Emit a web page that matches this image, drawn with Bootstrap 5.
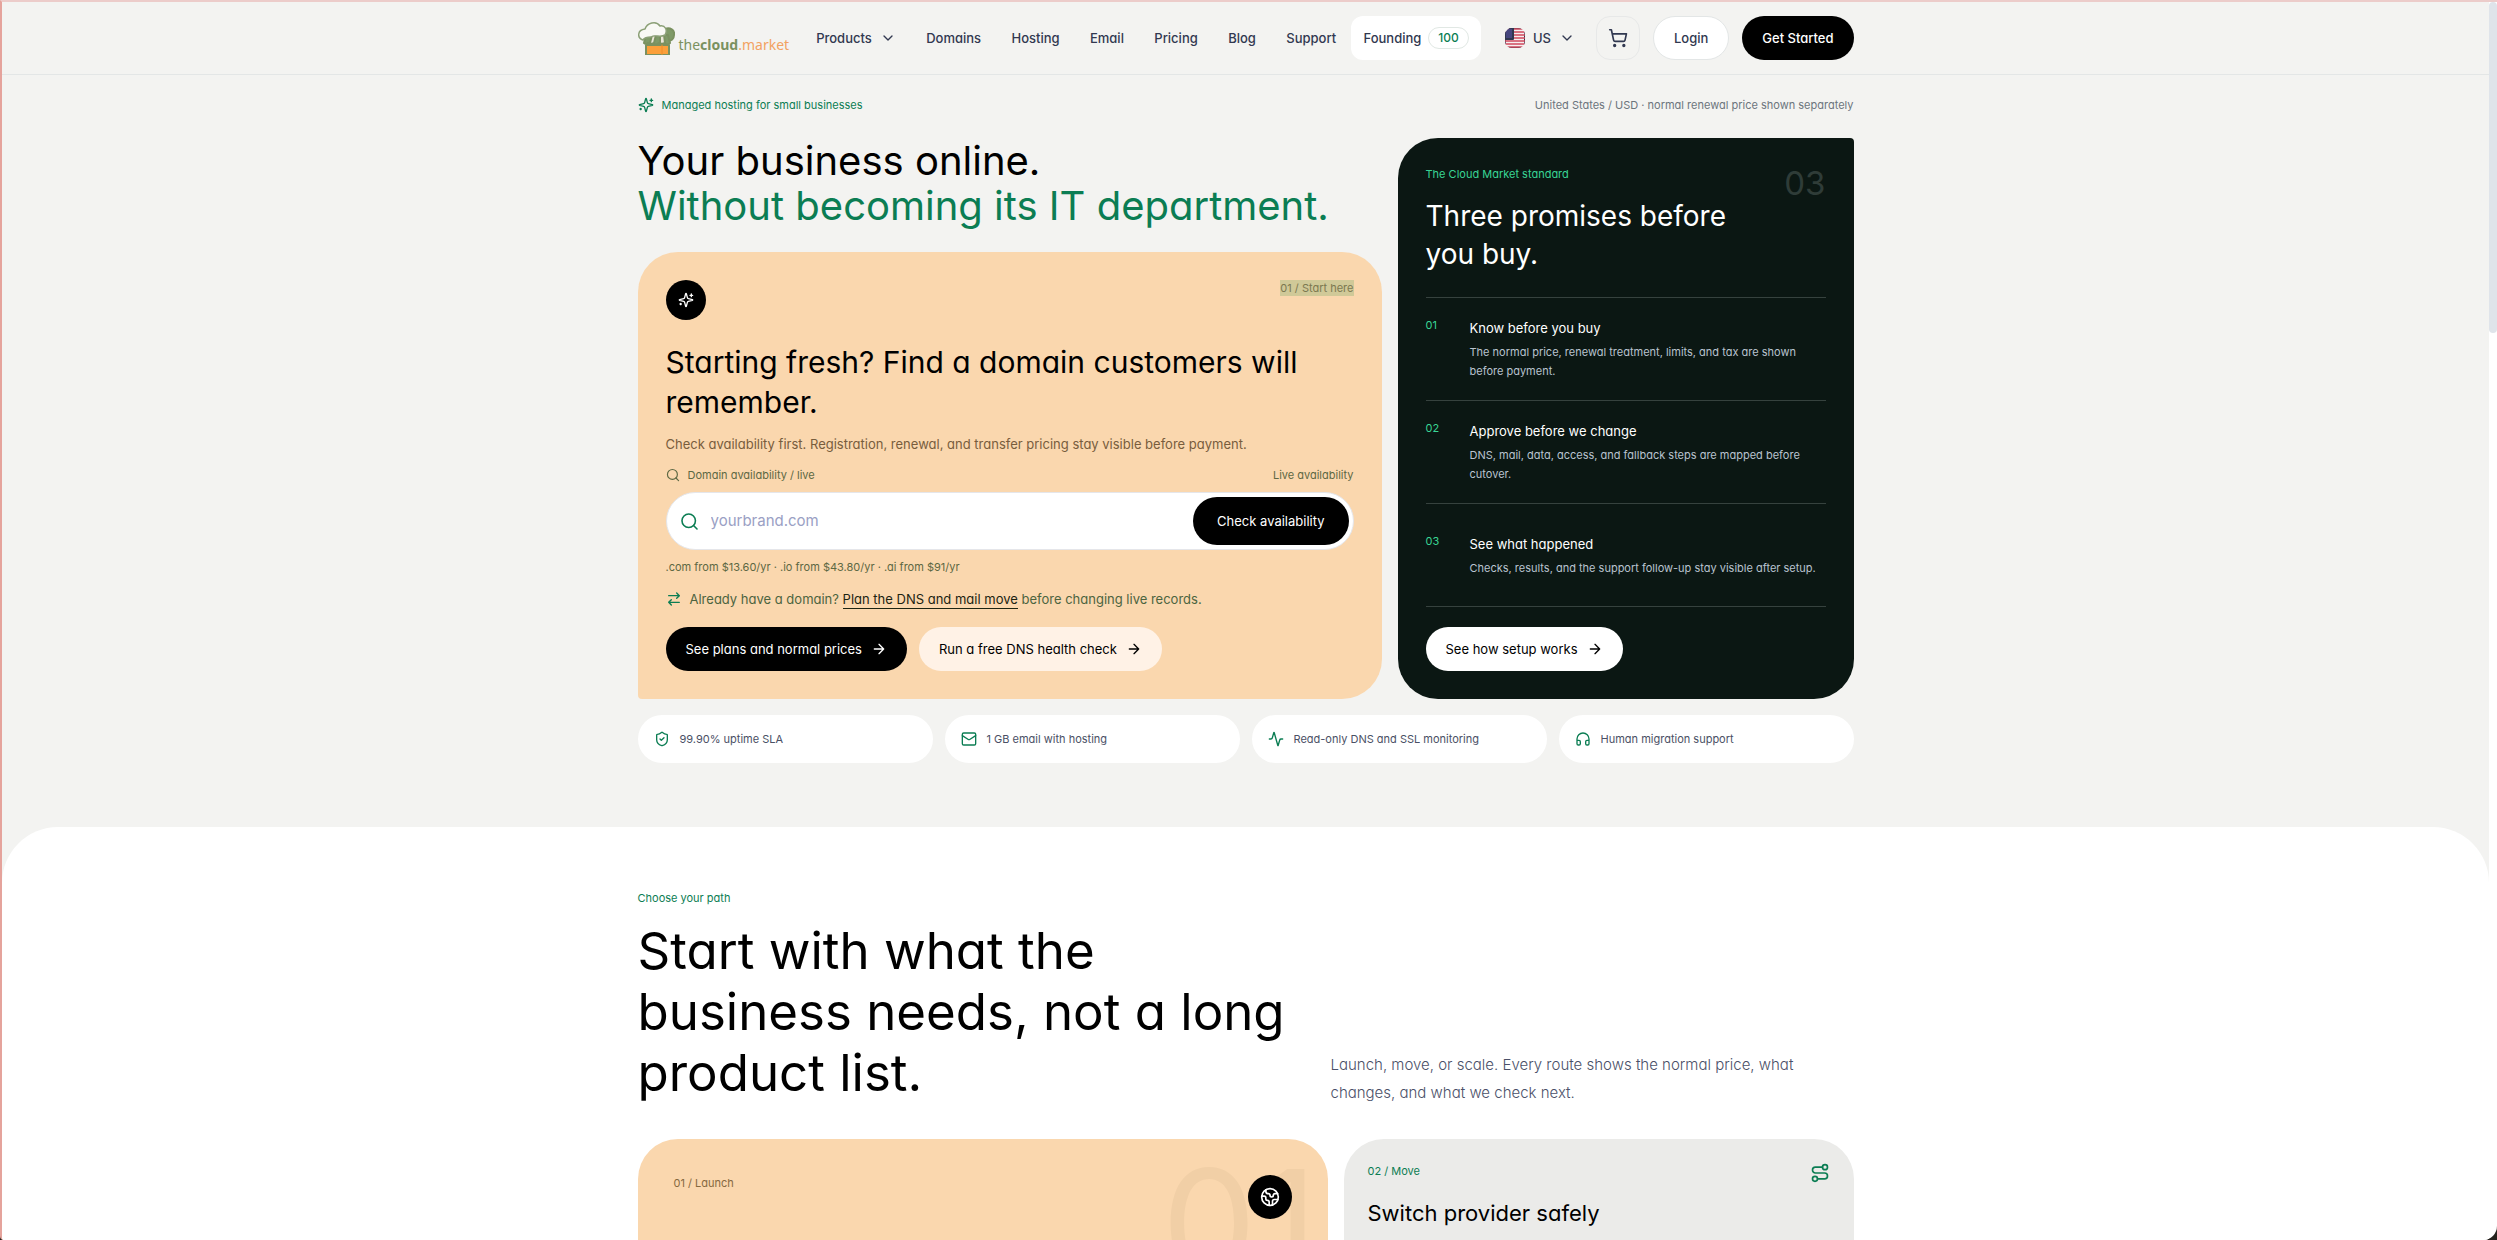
<!DOCTYPE html>
<html lang="en">
<head>
<meta charset="utf-8">
<meta name="viewport" content="width=device-width, initial-scale=1">
<title>thecloud.market</title>
<link href="https://cdn.jsdelivr.net/npm/bootstrap@5.3.0/dist/css/bootstrap.min.css" rel="stylesheet">
<style>
:root { --ink:#000; --green:#0b7d53; --peach:#fad7ae; --night:#0b1713; --stone:#f3f3f1; --slate:#4a5068; }
html { background:#24221d; }
body { font-family:Inter,"Liberation Sans",sans-serif; font-feature-settings:"cv11"; font-size:13px; line-height:20px; color:var(--ink); background:transparent; }
.frame { height:100vh; overflow:hidden; background:#fff; border-top:2px solid #ecccca; border-left:2px solid #e5a39c; border-radius:0 0 14px 4px; padding-right:8px; }
.scroll-thumb { position:fixed; top:2px; right:0; width:8px; height:331px; border-radius:4px; background:#dfe4ea; }
.wrap { width:100%; max-width:1216px; margin:0 auto; }
svg { display:block; flex:none; fill:none; stroke:currentColor; stroke-width:2; stroke-linecap:round; stroke-linejoin:round; }
.fs-tiny { font-size:11px; line-height:16px; }
.txt-green { color:var(--green); }

/* top bar */
.topbar { background:var(--stone); border-bottom:1px solid #e3e6e6; padding:14px 0; }
.topbar nav { padding-left:12px; }
.topbar .nav-item-link { display:flex; align-items:center; gap:8px; height:44px; padding:0 15px; font-size:13px; font-weight:500; color:#313850; text-decoration:none; border:0; background:none; white-space:nowrap; }
.topbar .founding { background:#fff; border-radius:12px; padding:0 12px; gap:7px; }
.count-pill { border:1px solid #e1e8e4; border-radius:11px; padding:0 9px; height:22px; line-height:20px; font-size:12px; color:var(--green); }
.brand { color:#7a9160; text-decoration:none; font-family:"Noto Sans",sans-serif; font-size:14px; line-height:20px; gap:4px; }
.brand .tail { color:#f2a262; }
.brand b { font-weight:700; }
.top-actions { gap:13px; }
.square-btn { width:44px; height:44px; border:1px solid #e7e8e8; border-radius:14px; background:transparent; color:#313850; }
.pill { display:inline-flex; align-items:center; justify-content:center; gap:9px; height:44px; padding:0 20px; border:0; border-radius:22px; font-size:13px; line-height:20px; white-space:nowrap; text-decoration:none; }
.pill-dark { background:#000; color:#fff; }
.pill-light { background:#fff; color:#000; }
.pill-cream { background:#fff2e6; color:#000; }
.pill-login { border:1px solid #e3e6e6; color:#313850; }

/* hero */
.hero { background:var(--stone); padding:22px 0 64px; }
.hero-top { height:16px; margin-bottom:25px; }
.hero-grid { display:grid; grid-template-columns:744fr 456fr; gap:16px; }
h1 { font-size:40px; line-height:45px; font-weight:400; margin:0 0 24px; }
.start-card { background:var(--peach); border-radius:40px 40px 40px 4px; padding:28px; }
.round-icon { width:40px; height:40px; border-radius:50%; background:#000; color:#fff; }
.picked { background:#d0c998; color:#7c7850; }
.start-card h2 { font-size:30px; line-height:40px; font-weight:400; margin:22px 0 12px; }
.start-card p { margin:0; color:#785d3d; }
.field-head { margin:13px 0 9px; }
.field { height:58px; border:1px solid #e5e6ea; border-radius:29px; background:#fff; padding:4px 4px 4px 13px; margin-bottom:9px; }
.field input { border:0; outline:0; background:none; font-size:15px; color:#000; min-width:0; padding:0 0 0 12px; }
.field input::placeholder { color:#9aa0c4; opacity:1; }
.olive { color:#5d6843; }
.brown { color:#86693f; }
.moving { color:#4c6440; gap:8px; margin:14px 0 18px; }
.moving a { color:#1c2412; text-decoration:none; border-bottom:1px solid #1c2412; padding-bottom:1px; }
.card-actions { display:flex; flex-wrap:wrap; gap:12px; }

.promise-card { background:var(--night); color:#fff; border-radius:40px 4px 40px 40px; padding:28px; }
.promise-card .kicker { margin-bottom:15px; }
.promise-card h2 { font-size:28px; line-height:38px; font-weight:400; margin:0; max-width:340px; }
.bright { color:#39d595; }
.big-three { font-size:33px; line-height:34px; color:#2f3c38; }
.promises { list-style:none; margin:0 0 20px; padding:0; border-top:1px solid #36423e; flex:1; display:grid; grid-auto-rows:1fr; }
.promises li { display:grid; grid-template-columns:44px 1fr; align-content:center; border-bottom:1px solid #36423e; }
.promises h3 { font-size:13px; line-height:22px; font-weight:400; margin:0 0 4px; }
.promises p { font-size:11px; line-height:19px; margin:0; color:#b9c3cf; }

.facts { display:grid; grid-template-columns:repeat(4,1fr); gap:12px; margin:16px 0 0; padding:0; list-style:none; }
.facts li { display:flex; align-items:center; gap:10px; height:48px; padding:0 16px; border-radius:24px; background:#fff; color:#4a5065; font-size:11px; }
.facts svg { color:var(--green); }

/* paths */
.paths { background:#fff; border-radius:56px 56px 0 0; padding-top:63px; }
.paths-wrap { background:var(--stone); }
.paths h2 { font-size:51px; line-height:61px; font-weight:400; margin:0; }
.paths-intro { display:grid; grid-template-columns:661fr 523fr; column-gap:32px; align-items:end; margin:14px 0 36px; }
.paths-intro p { font-size:15px; line-height:28px; font-weight:300; color:var(--slate); margin:0 0 -4px; max-width:480px; }
.path-grid { display:grid; grid-template-columns:690fr 510fr; gap:16px; }
.path-card { position:relative; overflow:hidden; min-height:400px; border-radius:40px; }
.launch { background:var(--peach); padding:36px; }
.launch .ghost { position:absolute; top:6px; right:10px; font-size:150px; line-height:158px; color:#f1cfa6; }
.launch .globe { position:relative; width:44px; height:44px; border-radius:50%; background:#000; color:#fff; }
.move { background:#ebebe9; padding:24px; }
.move h3 { font-size:22px; line-height:30px; font-weight:400; margin:15px 0 0; }
</style>
<script src="https://cdn.jsdelivr.net/npm/bootstrap@5.3.0/dist/js/bootstrap.bundle.min.js" defer></script>
</head>
<body>
<svg width="0" height="0" class="position-absolute" aria-hidden="true">
  <symbol id="i-sparkles" viewBox="0 0 24 24"><path d="M9.937 15.5A2 2 0 0 0 8.5 14.063l-6.135-1.582a.5.5 0 0 1 0-.962L8.5 9.936A2 2 0 0 0 9.937 8.5l1.582-6.135a.5.5 0 0 1 .963 0L14.063 8.5A2 2 0 0 0 15.5 9.937l6.135 1.581a.5.5 0 0 1 0 .964L15.5 14.063a2 2 0 0 0-1.437 1.437l-1.582 6.135a.5.5 0 0 1-.963 0z"/><path d="M20 3v4M22 5h-4M4 17v2M5 18H3"/></symbol>
  <symbol id="i-chevron" viewBox="0 0 24 24"><path d="m6 9 6 6 6-6"/></symbol>
  <symbol id="i-cart" viewBox="0 0 24 24"><circle cx="8" cy="21" r="1"/><circle cx="19" cy="21" r="1"/><path d="M2.05 2.05h2l2.66 12.42a2 2 0 0 0 2 1.58h9.78a2 2 0 0 0 1.95-1.57l1.65-7.43H5.12"/></symbol>
  <symbol id="i-search" viewBox="0 0 24 24"><circle cx="11" cy="11" r="8.500"/><path d="m21.500 21.500-4.400-4.400"/></symbol>
  <symbol id="i-swap" viewBox="0 0 24 24"><path d="m16 3 4 4-4 4M20 7H4M8 21l-4-4 4-4M4 17h16"/></symbol>
  <symbol id="i-arrow" viewBox="0 0 24 24"><path d="M5 12h14M12 5l7 7-7 7"/></symbol>
  <symbol id="i-shield" viewBox="0 0 24 24"><path d="M20 13c0 5-3.500 7.500-7.660 8.950a1 1 0 0 1-.670-.010C7.500 20.500 4 18 4 13V6a1 1 0 0 1 1-1c2 0 4.500-1.200 6.240-2.720a1.170 1.170 0 0 1 1.520 0C14.510 3.810 17 5 19 5a1 1 0 0 1 1 1z"/><path d="m9 12 2 2 4-4"/></symbol>
  <symbol id="i-mail" viewBox="0 0 24 24"><rect x="2" y="3" width="20" height="18" rx="2"/><path d="m22 7-8.970 5.700a1.940 1.940 0 0 1-2.060 0L2 7"/></symbol>
  <symbol id="i-activity" viewBox="0 0 24 24"><path d="M22 12h-2.480a2 2 0 0 0-1.930 1.460l-2.350 8.360a.25.25 0 0 1-.480 0L9.240 2.180a.25.25 0 0 0-.480 0l-2.350 8.360A2 2 0 0 1 4.490 12H2"/></symbol>
  <symbol id="i-headphones" viewBox="0 0 24 24"><path d="M3 14h3a2 2 0 0 1 2 2v3a2 2 0 0 1-2 2H5a2 2 0 0 1-2-2v-7a9 9 0 0 1 18 0v7a2 2 0 0 1-2 2h-1a2 2 0 0 1-2-2v-3a2 2 0 0 1 2-2h3"/></symbol>
  <symbol id="i-earth" viewBox="0 0 24 24"><path d="M21.540 15H17a2 2 0 0 0-2 2v4.540M7 3.340V5a3 3 0 0 0 3 3 2 2 0 0 1 2 2c0 1.100.9 2 2 2a2 2 0 0 0 2-2c0-1.100.9-2 2-2h3.170M11 21.950V18a2 2 0 0 0-2-2 2 2 0 0 1-2-2v-1a2 2 0 0 0-2-2H2.050"/><circle cx="12" cy="12" r="10"/></symbol>
  <symbol id="i-route" viewBox="0 0 24 24"><circle cx="6" cy="19" r="3"/><path d="M9 19h8.500a3.500 3.500 0 0 0 0-7h-11a3.500 3.500 0 0 1 0-7H15"/><circle cx="18" cy="5" r="3"/></symbol>
</svg>

<div class="frame">
  <header class="topbar">
    <div class="wrap d-flex align-items-center">
      <a class="brand d-flex align-items-end" href="#">
        <svg width="37" height="34" viewBox="0 0 37 34" stroke="none" aria-hidden="true">
          <path d="M27 8c5-2 10 1 9 6 0 4-3 6-6 6l-5-4z" fill="#7f9a68"/>
          <path d="M8 14h22l2 8c-2 2-4 2-5 0-2 2-4 2-6 0-2 2-4 2-6 0-2 2-4 2-5 0-1 1-3 1-4 0z" fill="#7f9a68"/>
          <path d="M14 14h4l-2 8c-2 1-3 1-4 0zM22 14h4l1 8c-2 1-4 1-5 0z" fill="#ebe6d8"/>
          <path d="M5 19c-6-2-6-10 2-11 2-6 11-9 15-3 5-1 8 4 5 9-5 3-10-1-14 2-3 0-6 0-8 3z" fill="#f9f9f5" stroke="#8ca077" stroke-width="1.500"/>
          <path d="M8 24h23v10H8z" fill="#fb9f3a"/><path d="M24 24v10" stroke="#f08c28" stroke-width="1"/>
        </svg>
        <span>the<b>cloud</b><span class="tail">.market</span></span>
      </a>
      <nav class="d-flex flex-grow-1 align-items-center justify-content-between">
        <button class="nav-item-link" type="button">Products <svg width="16" height="16"><use href="#i-chevron"/></svg></button>
        <a class="nav-item-link" href="#">Domains</a>
        <a class="nav-item-link" href="#">Hosting</a>
        <a class="nav-item-link" href="#">Email</a>
        <a class="nav-item-link" href="#">Pricing</a>
        <a class="nav-item-link" href="#">Blog</a>
        <a class="nav-item-link" href="#">Support</a>
        <a class="nav-item-link founding" href="#">Founding <span class="count-pill">100</span></a>
      </nav>
      <div class="top-actions d-flex align-items-center ps-2">
        <button class="nav-item-link ps-3 pe-2" type="button">
          <svg width="20" height="20" viewBox="0 0 20 20" stroke="none" aria-hidden="true">
            <clipPath id="flag-clip"><rect width="20" height="20" rx="7"/></clipPath>
            <g clip-path="url(#flag-clip)"><path fill="#f7eef0" d="M0 0h20v20H0z"/><path stroke="#cf4a5e" stroke-width="1.600" d="M0 1h20M0 4h20M0 7h20M0 10h20M0 13h20M0 16h20M0 19h20"/><path fill="#46467f" d="M0 0h8v11H0z"/></g>
          </svg>US <svg width="16" height="16"><use href="#i-chevron"/></svg>
        </button>
        <button class="square-btn d-flex align-items-center justify-content-center" type="button" aria-label="Cart"><svg width="20" height="20" stroke-width="1.500"><use href="#i-cart"/></svg></button>
        <a class="pill pill-light pill-login fw-medium" href="#">Login</a>
        <a class="pill pill-dark fw-medium" href="#">Get Started</a>
      </div>
    </div>
  </header>

  <section class="hero">
    <div class="wrap">
      <div class="hero-top fs-tiny d-flex justify-content-between align-items-center">
        <span class="txt-green d-flex align-items-center gap-2"><svg width="16" height="16"><use href="#i-sparkles"/></svg>Managed hosting for small businesses</span>
        <span class="text-secondary">United States / USD · normal renewal price shown separately</span>
      </div>
      <div class="hero-grid">
        <div>
          <h1>Your business online.<br><span class="txt-green">Without becoming its IT department.</span></h1>
          <div class="start-card">
            <div class="d-flex justify-content-between align-items-start">
              <span class="round-icon d-flex align-items-center justify-content-center"><svg width="16" height="16"><use href="#i-sparkles"/></svg></span>
              <span class="picked fs-tiny">01 / Start here</span>
            </div>
            <h2>Starting fresh? Find a domain customers will remember.</h2>
            <p>Check availability first. Registration, renewal, and transfer pricing stay visible before payment.</p>
            <div class="field-head fs-tiny olive d-flex align-items-center gap-2">
              <svg width="14" height="14"><use href="#i-search"/></svg>
              <label for="domain">Domain availability / live</label>
              <span class="ms-auto">Live availability</span>
            </div>
            <form class="field d-flex align-items-center">
              <svg class="txt-green" width="19" height="19"><use href="#i-search"/></svg>
              <input id="domain" class="flex-grow-1" type="text" placeholder="yourbrand.com">
              <button class="pill pill-dark px-4 h-100 rounded-pill" type="button">Check availability</button>
            </form>
            <div class="fs-tiny olive">.com from $13.60/yr · .io from $43.80/yr · .ai from $91/yr</div>
            <div class="moving d-flex align-items-center">
              <svg class="txt-green" width="16" height="16"><use href="#i-swap"/></svg>
              <span>Already have a domain? <a href="#">Plan the DNS and mail move</a> before changing live records.</span>
            </div>
            <div class="card-actions">
              <a class="pill pill-dark" href="#">See plans and normal prices <svg width="16" height="16"><use href="#i-arrow"/></svg></a>
              <a class="pill pill-cream" href="#">Run a free DNS health check <svg width="16" height="16"><use href="#i-arrow"/></svg></a>
            </div>
          </div>
        </div>
        <aside class="promise-card d-flex flex-column">
          <div class="d-flex justify-content-between align-items-start mb-4">
            <div>
              <div class="kicker bright fs-tiny">The Cloud Market standard</div>
              <h2>Three promises before you buy.</h2>
            </div>
            <span class="big-three">03</span>
          </div>
          <ol class="promises">
            <li><span class="bright fs-tiny">01</span><div><h3>Know before you buy</h3><p>The normal price, renewal treatment, limits, and tax are shown before payment.</p></div></li>
            <li><span class="bright fs-tiny">02</span><div><h3>Approve before we change</h3><p>DNS, mail, data, access, and fallback steps are mapped before cutover.</p></div></li>
            <li><span class="bright fs-tiny">03</span><div><h3>See what happened</h3><p>Checks, results, and the support follow-up stay visible after setup.</p></div></li>
          </ol>
          <a class="pill pill-light align-self-start" href="#">See how setup works <svg width="16" height="16"><use href="#i-arrow"/></svg></a>
        </aside>
      </div>
      <ul class="facts">
        <li><svg width="16" height="16"><use href="#i-shield"/></svg>99.90% uptime SLA</li>
        <li><svg width="16" height="16"><use href="#i-mail"/></svg>1 GB email with hosting</li>
        <li><svg width="16" height="16"><use href="#i-activity"/></svg>Read-only DNS and SSL monitoring</li>
        <li><svg width="16" height="16"><use href="#i-headphones"/></svg>Human migration support</li>
      </ul>
    </div>
  </section>

  <div class="paths-wrap">
    <section class="paths">
      <div class="wrap">
        <div class="txt-green fs-tiny">Choose your path</div>
        <div class="paths-intro">
          <h2>Start with what the business needs, not a long product list.</h2>
          <p>Launch, move, or scale. Every route shows the normal price, what changes, and what we check next.</p>
        </div>
        <div class="path-grid">
          <article class="path-card launch">
            <span class="ghost" aria-hidden="true">01</span>
            <div class="d-flex justify-content-between align-items-start">
              <span class="fs-tiny brown">01 / Launch</span>
              <span class="globe d-flex align-items-center justify-content-center"><svg width="20" height="20"><use href="#i-earth"/></svg></span>
            </div>
          </article>
          <article class="path-card move">
            <div class="d-flex justify-content-between align-items-start">
              <span class="fs-tiny txt-green">02 / Move</span>
              <svg class="txt-green" width="20" height="20"><use href="#i-route"/></svg>
            </div>
            <h3>Switch provider safely</h3>
          </article>
        </div>
      </div>
    </section>
  </div>
</div>
<div class="scroll-thumb" aria-hidden="true"></div>
</body>
</html>
